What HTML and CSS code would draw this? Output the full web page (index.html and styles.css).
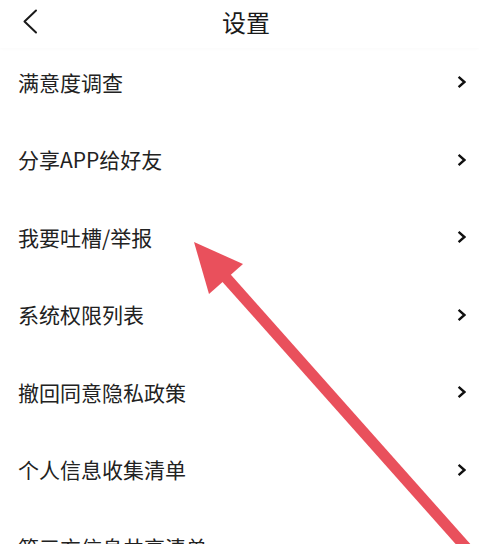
FILE: index.html
```html
<!DOCTYPE html>
<html lang="zh-CN">
<head>
<meta charset="utf-8">
<title>设置</title>
<link rel="stylesheet" href="styles.css">
</head>
<body>
<div class="page">
  <header class="topbar">
    <div class="back">
      <svg class="back-icon" width="16" height="26" viewBox="0 0 16 26"><polyline points="14,1.5 2.5,12.5 14,23.5" fill="none" stroke="#1a1a1a" stroke-width="2" stroke-linecap="round" stroke-linejoin="round"/></svg>
    </div>
    <h1 class="title">设置</h1>
    <div class="spacer"></div>
  </header>
  <ul class="list">
    <li class="row"><span class="label">满意度调查</span><svg class="chev" width="9" height="14" viewBox="0 0 9 14"><polyline points="1.6,1.8 7.4,7 1.6,12.2" fill="none" stroke="#111" stroke-width="2.4" stroke-linejoin="miter"/></svg></li>
    <li class="row"><span class="label">分享APP给好友</span><svg class="chev" width="9" height="14" viewBox="0 0 9 14"><polyline points="1.6,1.8 7.4,7 1.6,12.2" fill="none" stroke="#111" stroke-width="2.4" stroke-linejoin="miter"/></svg></li>
    <li class="row"><span class="label">我要吐槽/举报</span><svg class="chev" width="9" height="14" viewBox="0 0 9 14"><polyline points="1.6,1.8 7.4,7 1.6,12.2" fill="none" stroke="#111" stroke-width="2.4" stroke-linejoin="miter"/></svg></li>
    <li class="row"><span class="label">系统权限列表</span><svg class="chev" width="9" height="14" viewBox="0 0 9 14"><polyline points="1.6,1.8 7.4,7 1.6,12.2" fill="none" stroke="#111" stroke-width="2.4" stroke-linejoin="miter"/></svg></li>
    <li class="row"><span class="label">撤回同意隐私政策</span><svg class="chev" width="9" height="14" viewBox="0 0 9 14"><polyline points="1.6,1.8 7.4,7 1.6,12.2" fill="none" stroke="#111" stroke-width="2.4" stroke-linejoin="miter"/></svg></li>
    <li class="row"><span class="label">个人信息收集清单</span><svg class="chev" width="9" height="14" viewBox="0 0 9 14"><polyline points="1.6,1.8 7.4,7 1.6,12.2" fill="none" stroke="#111" stroke-width="2.4" stroke-linejoin="miter"/></svg></li>
    <li class="row"><span class="label">第三方信息共享清单</span><svg class="chev" width="9" height="14" viewBox="0 0 9 14"><polyline points="1.6,1.8 7.4,7 1.6,12.2" fill="none" stroke="#111" stroke-width="2.4" stroke-linejoin="miter"/></svg></li>
  </ul>
  <svg class="arrow" width="479" height="544" viewBox="0 0 479 544">
    <line x1="221" y1="272" x2="495" y2="580" stroke="#e9505c" stroke-width="11"/>
    <polygon points="194,242 243,264 209,294" fill="#e9505c"/>
  </svg>
</div>
</body>
</html>
```

FILE: styles.css
```css
html, body {
  margin: 0;
  padding: 0;
  background: #ffffff;
}

body {
  width: 479px;
  height: 544px;
  overflow: hidden;
  font-family: "Noto Sans CJK SC", "Noto Sans", sans-serif;
  color: #1a1a1a;
}

.page {
  position: relative;
  width: 479px;
  height: 544px;
  overflow: hidden;
}

.topbar {
  display: grid;
  grid-template-columns: 46px 1fr 33px;
  height: 48px;
  background: #ffffff;
  box-shadow: 0 1px 3px rgba(0, 0, 0, 0.025);
}

.back {
  display: flex;
  align-items: flex-start;
}

.back-icon {
  display: block;
  margin-left: 22px;
  margin-top: 9px;
}

.title {
  margin: 0;
  font-size: 24px;
  font-weight: 400;
  line-height: 44px;
  text-align: center;
  color: #1a1a1a;
}

.list {
  list-style: none;
  margin: 0;
  padding: 0;
}

.row {
  box-sizing: border-box;
  height: 77.6px;
  display: flex;
  align-items: flex-start;
  justify-content: space-between;
  padding: 19.5px 13px 0 18px;
}

.label {
  font-size: 21px;
  line-height: 28px;
  color: #222222;
}

.chev {
  display: block;
  margin-top: 7.5px;
}

.arrow {
  position: absolute;
  left: 0;
  top: 0;
  pointer-events: none;
}
```
